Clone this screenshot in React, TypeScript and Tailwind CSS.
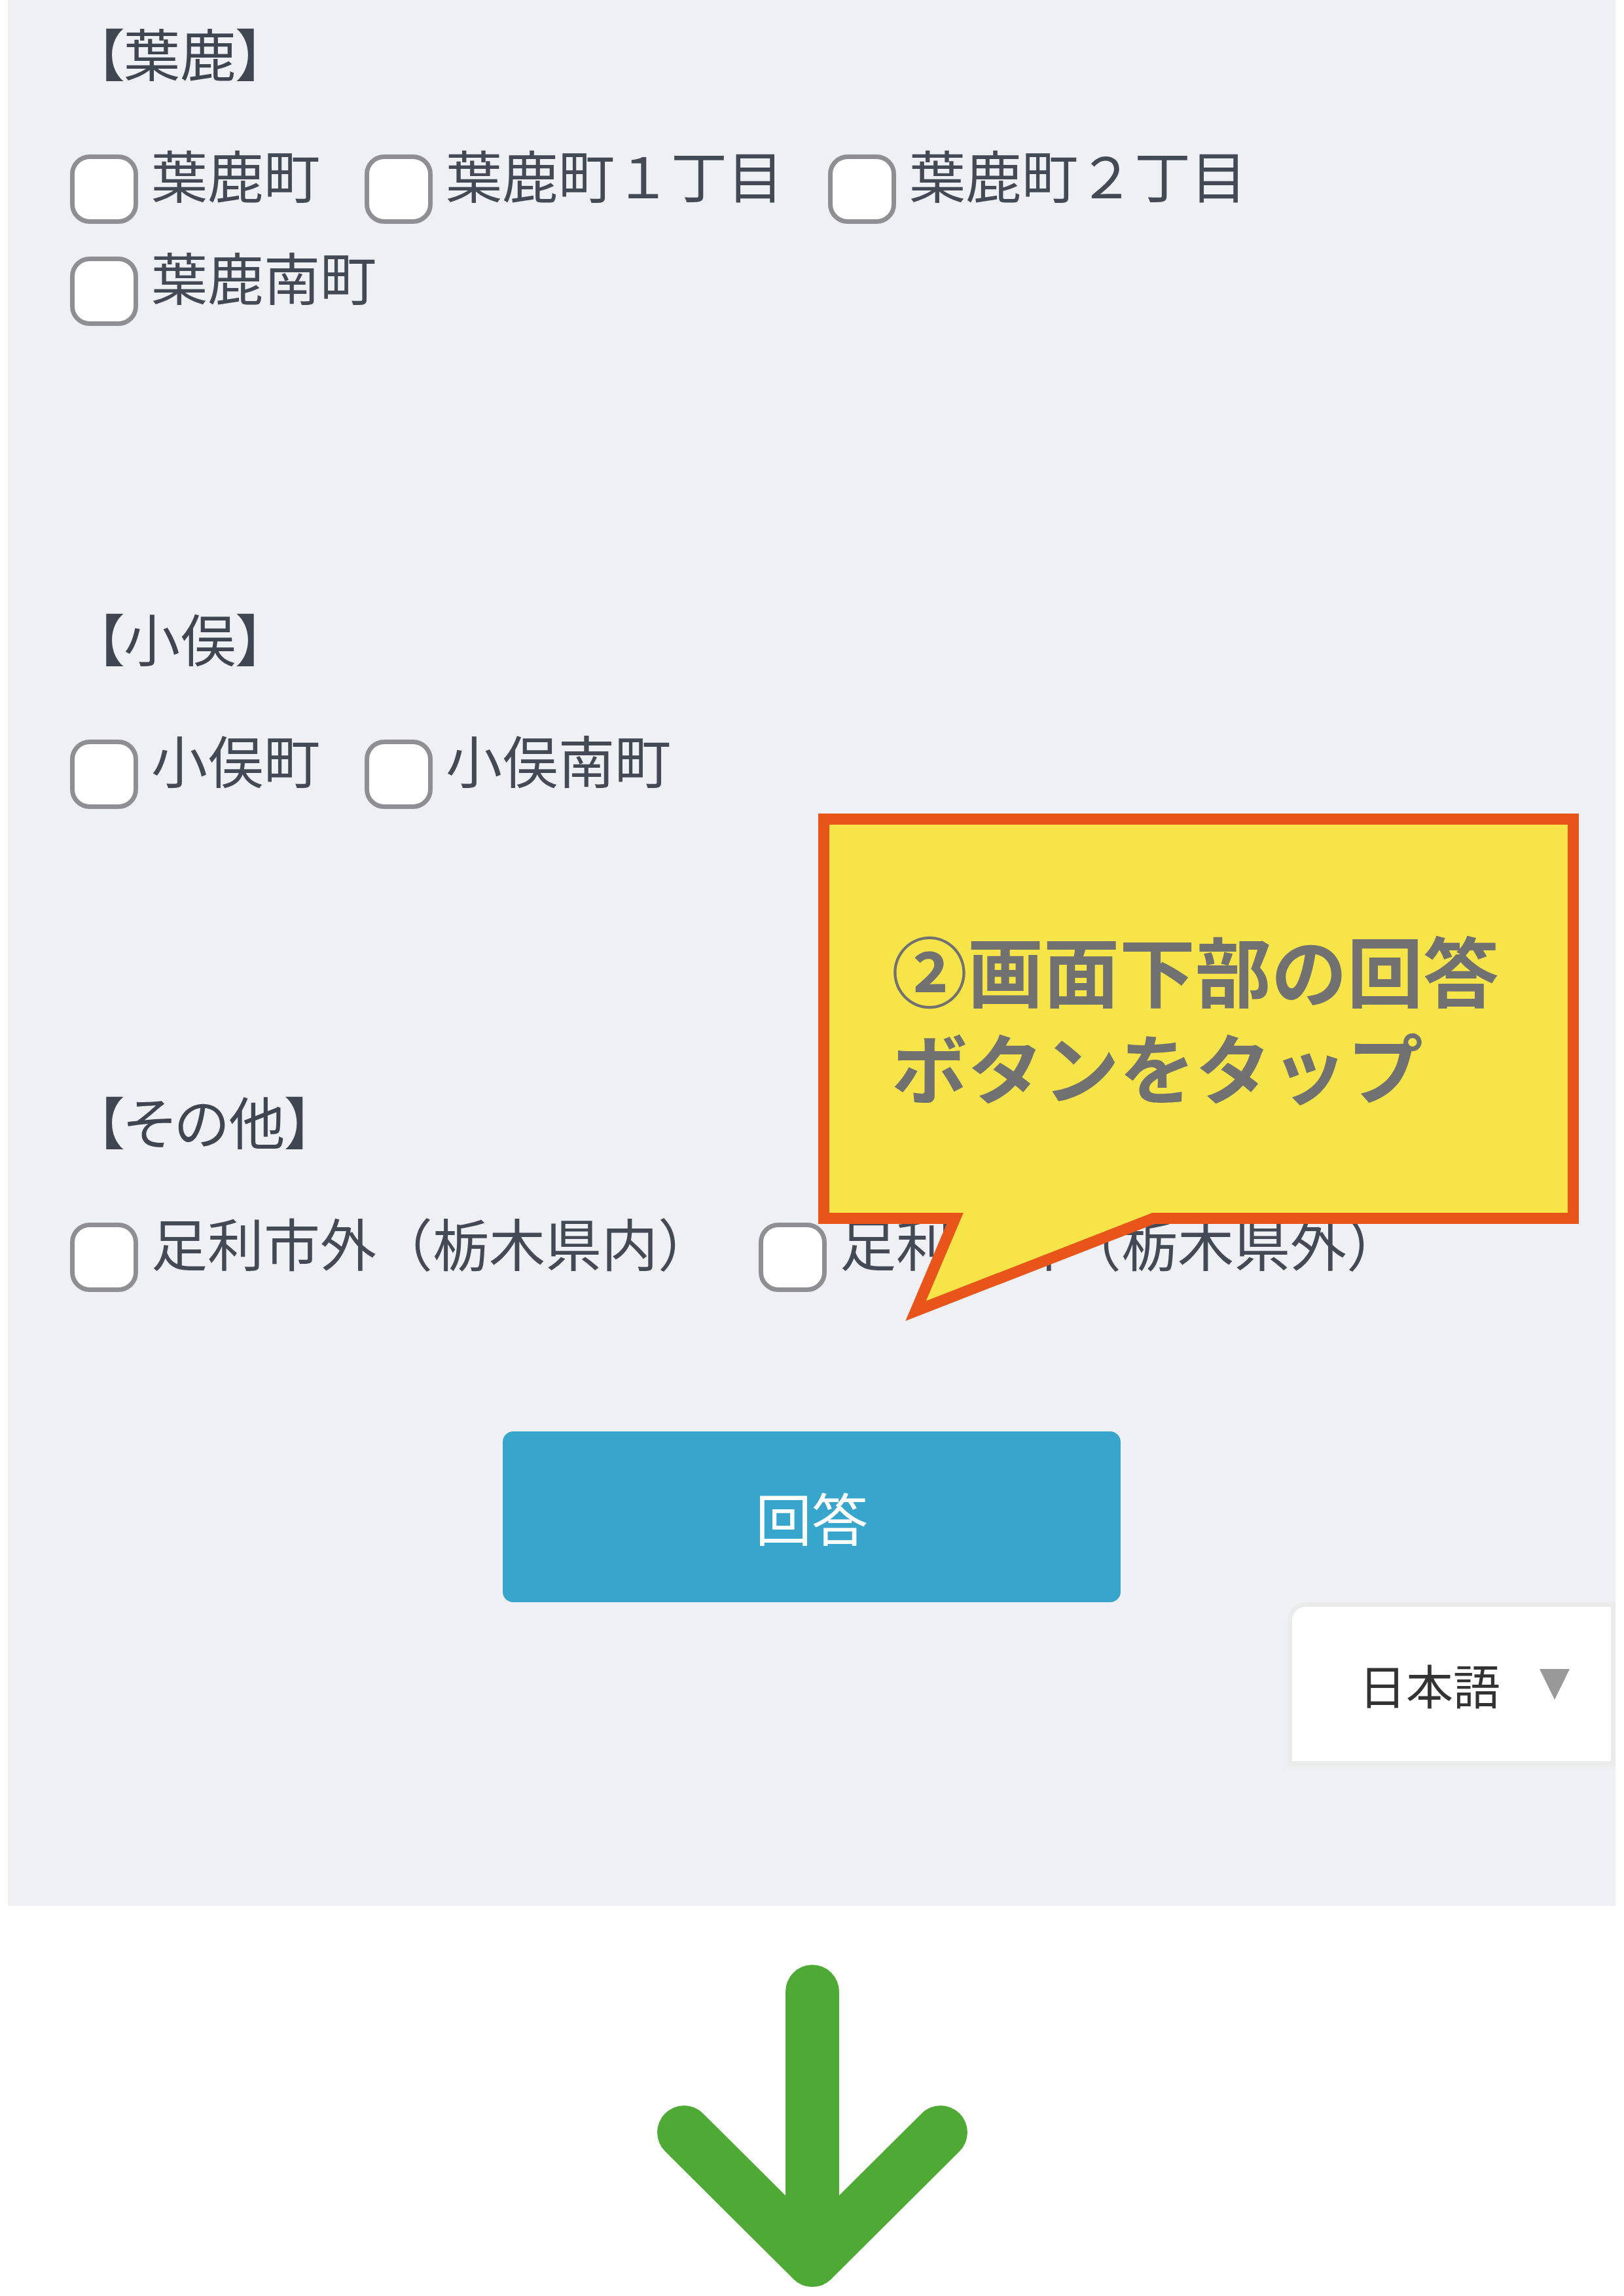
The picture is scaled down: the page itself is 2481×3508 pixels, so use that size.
import React from "react";

type Section = { title: string; items: string[] };

const sections: Section[] = [
  { title: "【葉鹿】", items: ["葉鹿町", "葉鹿町１丁目", "葉鹿町２丁目", "葉鹿南町"] },
  { title: "【小俣】", items: ["小俣町", "小俣南町"] },
  { title: "【その他】", items: ["足利市外（栃木県内）", "足利市外（栃木県外）"] },
];

function CheckItem({ label }: { label: string }) {
  return (
    <label className="flex items-start mr-[68px]">
      <span className="mt-[13px] w-[104px] h-[106px] shrink-0 rounded-[30px] border-[7px] border-[#8e8e93] bg-white" />
      <span className="ml-[20px] text-[86px] leading-[86px] text-[#434a55] whitespace-nowrap">{label}</span>
    </label>
  );
}

function Callout() {
  return (
    <div className="absolute left-[1240px] top-[1235px] w-[1200px] h-[800px]">
      <svg width="1200" height="800" viewBox="1240 1235 1200 800" className="absolute inset-0">
        <path
          d="M1258.5 1251.5 H2403.5 V1861.5 H1762 L1399 2003 L1459 1861.5 H1258.5 Z"
          fill="#f6e448"
          stroke="#e9541a"
          strokeWidth="17"
          strokeLinejoin="miter"
        />
      </svg>
      <p className="absolute left-[122px] top-[170px] text-[116px] leading-[148px] font-bold text-[#717171] whitespace-nowrap">
        ②画面下部の回答
        <br />
        ボタンをタップ
      </p>
    </div>
  );
}

export default function App() {
  return (
    <div className="relative w-[2481px] h-[3508px] bg-white font-['Noto_Sans_CJK_JP',sans-serif]">
      <div className="ml-[12px] w-[2456px] h-[2912px] bg-[#eff0f4] pt-[37px] flex flex-col">
        {sections.map((s, i) => (
          <section key={s.title} className={i > 0 ? "mt-[433px]" : ""}>
            <h2 className="pl-[134px] h-[86px] text-[86px] leading-[86px] font-normal text-[#3f4651] [font-feature-settings:'palt']">
              {s.title}
            </h2>
            <div className="mt-[100px] pl-[95px] w-[2390px] flex flex-wrap gap-y-[37px]">
              {s.items.map((it) => (
                <CheckItem key={it} label={it} />
              ))}
            </div>
          </section>
        ))}

        <button className="mt-[213px] mx-auto w-[944px] h-[261px] shrink-0 rounded-[16px] bg-[#38a5cc] text-white text-[86px] leading-[86px] flex items-center justify-center">
          回答
        </button>

        <div className="self-end w-[501px] h-[250px] shrink-0 rounded-tl-[28px] border-[7px] border-[#ebebeb] bg-white flex items-center pl-[102px]">
          <span className="text-[72px] leading-[72px] text-[#333333]">日本語</span>
          <svg width="46" height="47" viewBox="0 0 46 47" className="ml-[60px]">
            <polygon points="0,0 46,0 23,47" fill="#999999" />
          </svg>
        </div>
      </div>

      <div className="flex justify-center">
        <svg width="480" height="596" viewBox="1000 2912 480 596">
          <g stroke="#4faa35" strokeWidth="82" strokeLinecap="round" strokeLinejoin="round" fill="none">
            <path d="M1240 3043 V3453" />
            <path d="M1044 3258 L1240 3453 L1436 3258" />
          </g>
        </svg>
      </div>

      <Callout />
    </div>
  );
}
